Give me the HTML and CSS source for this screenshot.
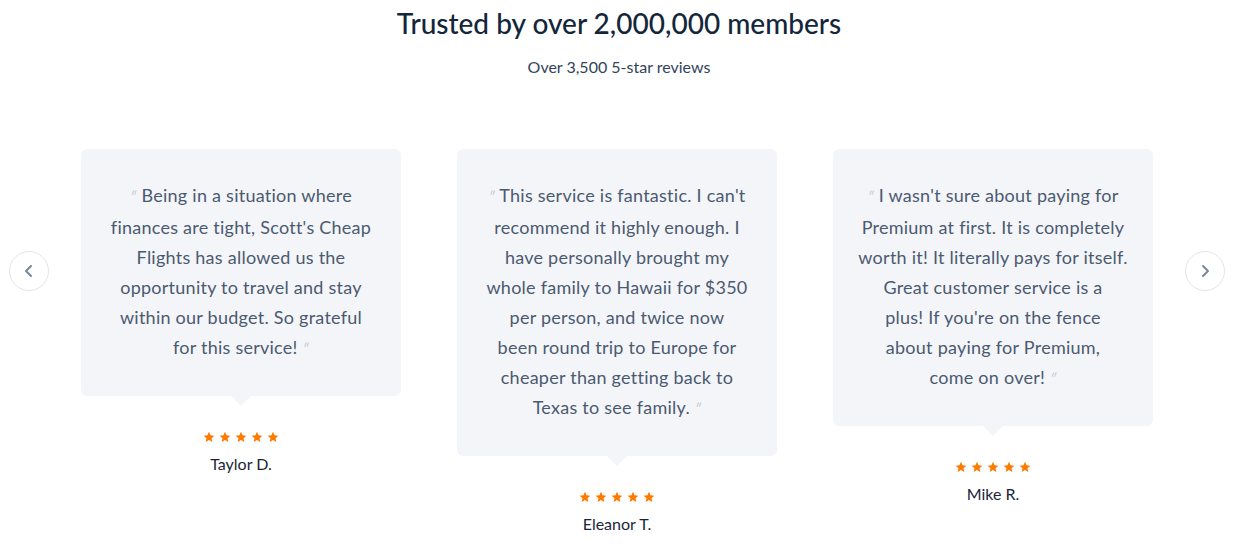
FILE: index.html
```html
<!DOCTYPE html>
<html>
<head>
<meta charset="utf-8">
<link rel="stylesheet" href="styles.css">
</head>
<body>
<section class="reviews">
  <h1 class="title">Trusted by over 2,000,000 members</h1>
  <p class="subtitle">Over 3,500 5-star reviews</p>
  <div class="carousel">
    <button class="arrow"><svg width="14" height="14" viewBox="0 0 14 14"><path d="M9 2 L4 7 L9 12" fill="none" stroke="#7b8699" stroke-width="2" stroke-linecap="round" stroke-linejoin="round"/></svg></button>
    <div class="item">
      <div class="card"><p class="quote"><span class="qm">″</span> Being in a situation where<br>finances are tight, Scott's Cheap<br>Flights has allowed us the<br>opportunity to travel and stay<br>within our budget. So grateful<br>for this service! <span class="qm">″</span></p></div>
      <div class="stars"><svg viewBox="0 0 24 24"><path d="M12 1.5l3.1 7.1 7.7.7-5.8 5.1 1.7 7.6L12 18l-6.7 4 1.7-7.6L1.2 9.3l7.7-.7z"/></svg><svg viewBox="0 0 24 24"><path d="M12 1.5l3.1 7.1 7.7.7-5.8 5.1 1.7 7.6L12 18l-6.7 4 1.7-7.6L1.2 9.3l7.7-.7z"/></svg><svg viewBox="0 0 24 24"><path d="M12 1.5l3.1 7.1 7.7.7-5.8 5.1 1.7 7.6L12 18l-6.7 4 1.7-7.6L1.2 9.3l7.7-.7z"/></svg><svg viewBox="0 0 24 24"><path d="M12 1.5l3.1 7.1 7.7.7-5.8 5.1 1.7 7.6L12 18l-6.7 4 1.7-7.6L1.2 9.3l7.7-.7z"/></svg><svg viewBox="0 0 24 24"><path d="M12 1.5l3.1 7.1 7.7.7-5.8 5.1 1.7 7.6L12 18l-6.7 4 1.7-7.6L1.2 9.3l7.7-.7z"/></svg></div>
      <div class="name">Taylor D.</div>
    </div>
    <div class="item">
      <div class="card"><p class="quote"><span class="qm">″</span> This service is fantastic. I can't<br>recommend it highly enough. I<br>have personally brought my<br>whole family to Hawaii for $350<br>per person, and twice now<br>been round trip to Europe for<br>cheaper than getting back to<br>Texas to see family. <span class="qm">″</span></p></div>
      <div class="stars"><svg viewBox="0 0 24 24"><path d="M12 1.5l3.1 7.1 7.7.7-5.8 5.1 1.7 7.6L12 18l-6.7 4 1.7-7.6L1.2 9.3l7.7-.7z"/></svg><svg viewBox="0 0 24 24"><path d="M12 1.5l3.1 7.1 7.7.7-5.8 5.1 1.7 7.6L12 18l-6.7 4 1.7-7.6L1.2 9.3l7.7-.7z"/></svg><svg viewBox="0 0 24 24"><path d="M12 1.5l3.1 7.1 7.7.7-5.8 5.1 1.7 7.6L12 18l-6.7 4 1.7-7.6L1.2 9.3l7.7-.7z"/></svg><svg viewBox="0 0 24 24"><path d="M12 1.5l3.1 7.1 7.7.7-5.8 5.1 1.7 7.6L12 18l-6.7 4 1.7-7.6L1.2 9.3l7.7-.7z"/></svg><svg viewBox="0 0 24 24"><path d="M12 1.5l3.1 7.1 7.7.7-5.8 5.1 1.7 7.6L12 18l-6.7 4 1.7-7.6L1.2 9.3l7.7-.7z"/></svg></div>
      <div class="name">Eleanor T.</div>
    </div>
    <div class="item">
      <div class="card"><p class="quote"><span class="qm">″</span> I wasn't sure about paying for<br>Premium at first. It is completely<br>worth it! It literally pays for itself.<br>Great customer service is a<br>plus! If you're on the fence<br>about paying for Premium,<br>come on over! <span class="qm">″</span></p></div>
      <div class="stars"><svg viewBox="0 0 24 24"><path d="M12 1.5l3.1 7.1 7.7.7-5.8 5.1 1.7 7.6L12 18l-6.7 4 1.7-7.6L1.2 9.3l7.7-.7z"/></svg><svg viewBox="0 0 24 24"><path d="M12 1.5l3.1 7.1 7.7.7-5.8 5.1 1.7 7.6L12 18l-6.7 4 1.7-7.6L1.2 9.3l7.7-.7z"/></svg><svg viewBox="0 0 24 24"><path d="M12 1.5l3.1 7.1 7.7.7-5.8 5.1 1.7 7.6L12 18l-6.7 4 1.7-7.6L1.2 9.3l7.7-.7z"/></svg><svg viewBox="0 0 24 24"><path d="M12 1.5l3.1 7.1 7.7.7-5.8 5.1 1.7 7.6L12 18l-6.7 4 1.7-7.6L1.2 9.3l7.7-.7z"/></svg><svg viewBox="0 0 24 24"><path d="M12 1.5l3.1 7.1 7.7.7-5.8 5.1 1.7 7.6L12 18l-6.7 4 1.7-7.6L1.2 9.3l7.7-.7z"/></svg></div>
      <div class="name">Mike R.</div>
    </div>
    <button class="arrow"><svg width="14" height="14" viewBox="0 0 14 14"><path d="M5 2 L10 7 L5 12" fill="none" stroke="#7b8699" stroke-width="2" stroke-linecap="round" stroke-linejoin="round"/></svg></button>
  </div>
</section>
</body>
</html>
```
FILE: styles.css
```css
html, body { margin: 0; padding: 0; background: #fff; }
body { font-family: Lato, "Noto Sans", sans-serif; width: 1238px; height: 548px; overflow: hidden; }
.reviews { display: flex; flex-direction: column; align-items: center; }
.title { margin: 6px 0 0; font-size: 28px; line-height: 34px; font-weight: 500; color: #13263a; letter-spacing: 0; }
.subtitle { margin: 17px 0 0; font-size: 16px; line-height: 20px; color: #33435a; }
.carousel { display: flex; align-self: stretch; padding-left: 9px; margin-top: 72px; gap: 32px; align-items: flex-start; }
.arrow { width: 40px; height: 40px; border-radius: 50%; border: 1px solid #e1e5ee; background: #fff; display: flex; align-items: center; justify-content: center; padding: 0; margin-top: 102px; flex: none; }
.item { width: 320px; flex: none; display: flex; flex-direction: column; align-items: center; }
.item + .item { margin-left: 24px; }
.card { position: relative; width: 320px; box-sizing: border-box; background: #f4f5f9; border-radius: 6px; padding: 31px 14px 32px; }
.card::after { content: ""; position: absolute; left: 50%; bottom: -10px; margin-left: -10px; border-left: 10px solid transparent; border-right: 10px solid transparent; border-top: 10px solid #f4f5f9; }
.quote { margin: 0; text-align: center; font-size: 18px; line-height: 30px; color: #4b5a70; letter-spacing: 0.25px; white-space: nowrap; }
.qm { color: #c3c8d2; font-size: 13px; font-style: italic; }
.stars { margin-top: 35px; display: flex; gap: 4px; fill: #ff7a00; height: 12px; }
.stars svg { width: 12px; height: 12px; display: block; }
.name { margin-top: 11px; font-size: 16px; line-height: 20px; color: #1a2638; }
```
